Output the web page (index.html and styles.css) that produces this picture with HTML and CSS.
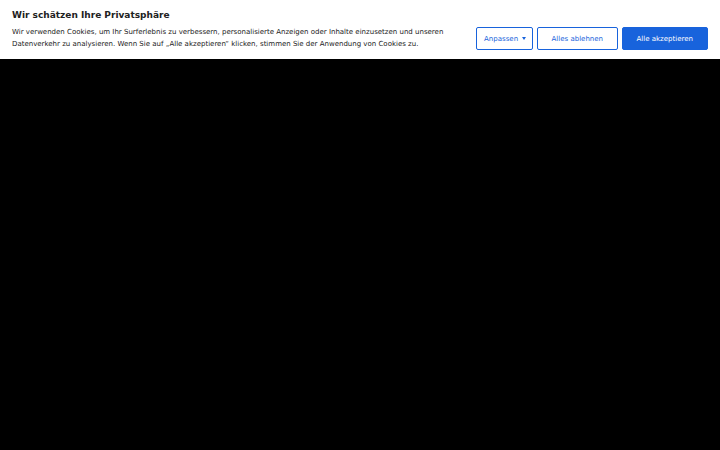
FILE: index.html
```html
<!DOCTYPE html>
<html lang="de">

<head>
    <meta charset="utf-8">
    <meta name="viewport" content="width=device-width, initial-scale=1.0">
    <title>Cookie-Einstellungen</title>
    <link rel="stylesheet" href="styles.css">
</head>

<body>
    <div class="consent-bar">
        <div class="consent-text">
            <p class="consent-title">Wir schätzen Ihre Privatsphäre</p>
            <p class="consent-notice">Wir verwenden Cookies, um Ihr Surferlebnis zu verbessern, personalisierte Anzeigen oder Inhalte einzusetzen und unseren Datenverkehr zu analysieren. Wenn Sie auf „Alle akzeptieren“ klicken, stimmen Sie der Anwendung von Cookies zu.</p>
        </div>
        <div class="consent-buttons">
            <button class="btn btn-outline btn-customize">Anpassen<span class="caret"></span></button>
            <button class="btn btn-outline">Alles ablehnen</button>
            <button class="btn btn-primary">Alle akzeptieren</button>
        </div>
    </div>
</body>
</html>
```

FILE: styles.css
```css
body {
    margin: 0;
    background-color: #000;
    font-family: "DejaVu Sans", sans-serif;
}

.consent-bar {
    display: flex;
    align-items: flex-end;
    justify-content: space-between;
    background-color: #fff;
    padding: 9px 12px 9px 12px;
    box-shadow: 0 1px 3px rgba(0, 0, 0, 0.15);
}

.consent-title {
    margin: 0 0 5px 0;
    font-size: 9px;
    font-weight: bold;
    color: #212121;
    line-height: 12px;
}

.consent-notice {
    margin: 0;
    max-width: 445px;
    font-size: 7px;
    line-height: 12px;
    color: #212121;
}

.consent-buttons {
    display: flex;
    gap: 4px;
    flex-shrink: 0;
}

.btn {
    height: 23px;
    padding: 0 13.5px;
    font-family: "DejaVu Sans", sans-serif;
    font-size: 7px;
    white-space: nowrap;
    border: 1px solid #1863dc;
    border-radius: 2px;
    cursor: pointer;
}

.btn-outline {
    background-color: #fff;
    color: #1863dc;
}

.btn-customize {
    padding: 0 6px 0 7px;
}

.btn-primary {
    background-color: #1863dc;
    color: #fff;
    padding: 0 14px;
}

.caret {
    display: inline-block;
    margin-left: 4px;
    vertical-align: middle;
    border-left: 2.5px solid transparent;
    border-right: 2.5px solid transparent;
    border-top: 3px solid #1863dc;
}
```
